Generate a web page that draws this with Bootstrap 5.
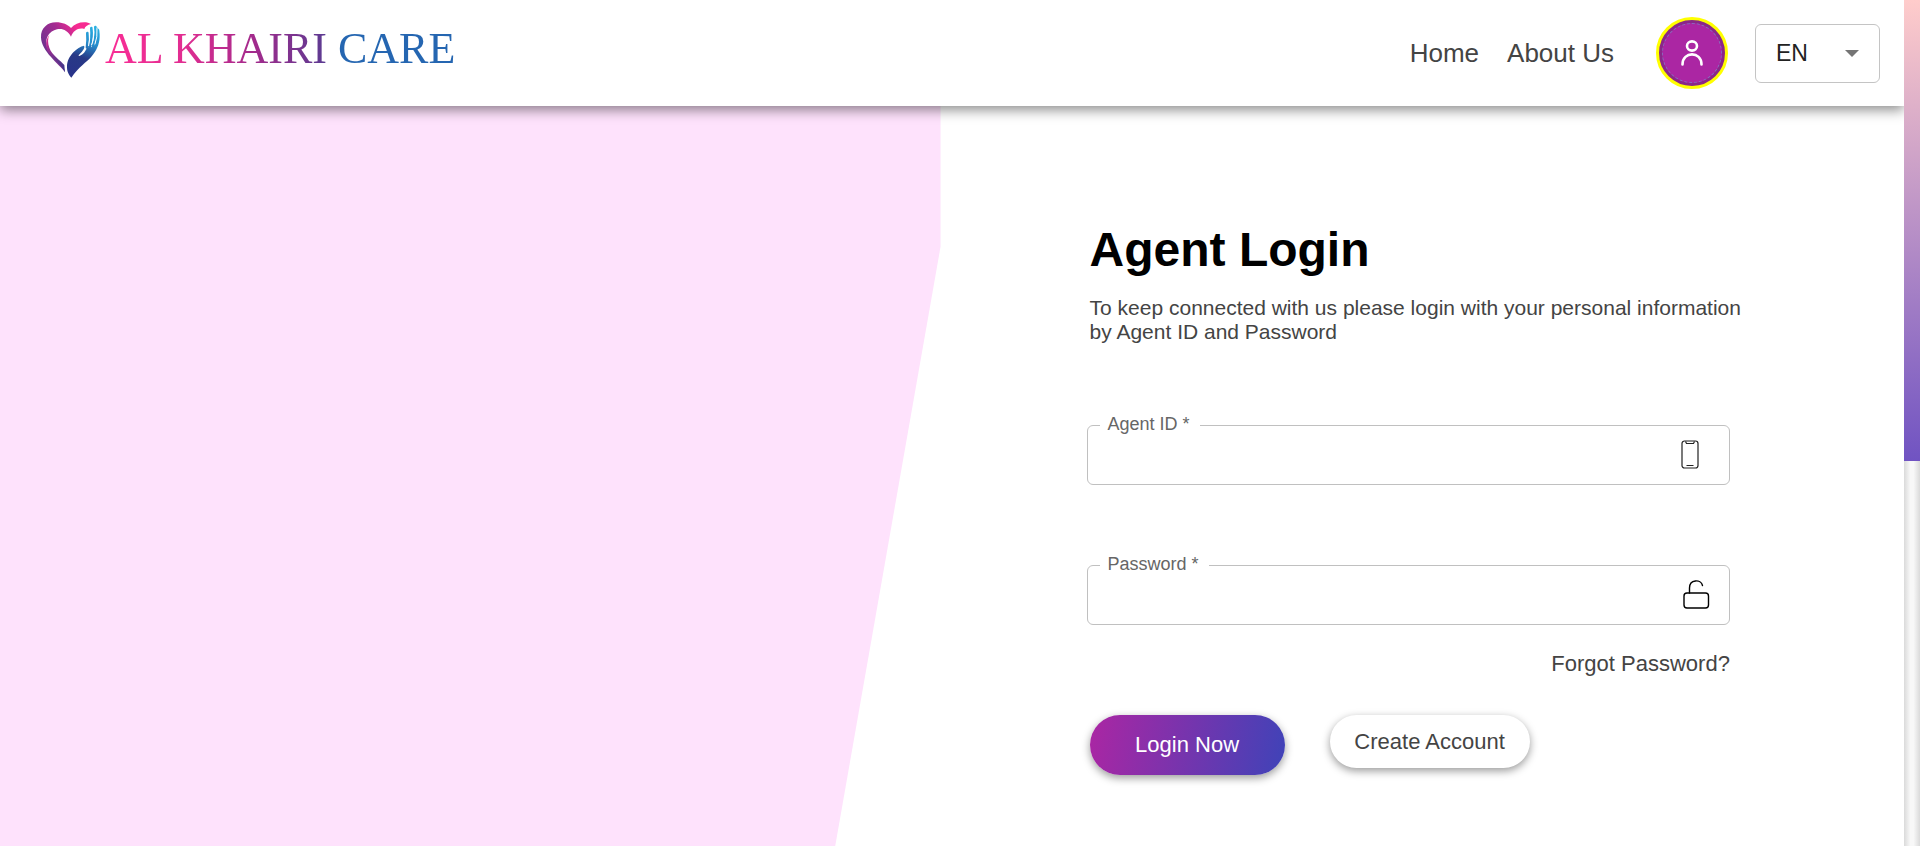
<!DOCTYPE html>
<html lang="en">
<head>
<meta charset="utf-8">
<meta name="viewport" content="width=device-width, initial-scale=1">
<title>Agent Login - Al Khairi Care</title>
<link href="https://cdn.jsdelivr.net/npm/bootstrap@5.3.0/dist/css/bootstrap.min.css" rel="stylesheet">
<style>
body { font-family: "Liberation Sans", Arial, sans-serif; color: #444; background: #fff; }
.site-header { min-height: 106px; padding: 0 24px 0 40px; background: #fff; box-shadow: 0 4px 12px rgba(0,0,0,.45); clip-path: inset(0 0 -30px 0); z-index: 2; }
.brand-text { font-family: "Liberation Serif", "Times New Roman", serif; font-size: 44px; line-height: 50px; color: transparent; -webkit-background-clip: text; background-clip: text; background-image: linear-gradient(90deg, #f92d95 0%, #e22d91 22%, #a42a8c 42%, #553c92 65%, #2566b1 66%); }
.site-nav { gap: 28px; margin-right: 42px; }
.site-nav a { font-size: 26px; line-height: 30px; color: #444; text-decoration: none; }
.avatar { width: 72px; height: 72px; margin-right: 27px; padding: 3px; border: 3px solid #ff0; border-radius: 50%; background: #8a2789; }
.avatar-disc { border: 1px dashed #8b6cc0; border-radius: 50%; background: #ab26a3; }
.lang-select { width: 125px; height: 59px; padding: 0 20px; font-size: 23px; color: #222; appearance: none; border: 1px solid #c4c4c4; border-radius: 6px; background: #fff url("data:image/svg+xml,%3Csvg xmlns='http://www.w3.org/2000/svg' width='14' height='7'%3E%3Cpath d='M0 0h14L7 7z' fill='%23757575'/%3E%3C/svg%3E") no-repeat right 20px center; }
.pink-panel { flex: 0 0 49.4%; background: #fee2fc; clip-path: polygon(0 0, 100% 0, 100% 19%, 88.8% 100%, 0 100%); }
.login-panel { padding: 115px 0 71px 146px; }
.login-title { font-size: 48px; line-height: 58px; margin-bottom: 17px; color: #000; }
.login-lead { font-size: 21px; line-height: 24px; margin-bottom: 81px; max-width: 664px; }
.inset-start { padding-left: 3px; }
.login-form { width: 78.7%; }
.field { height: 60px; }
.field input { height: 100%; padding: 0 80px 0 20px; font-size: 20px; border: 1px solid #c0c0c0; border-radius: 6px; }
.field label { left: 13px; top: -13px; padding: 0 10px 0 8px; background: #fff; font-size: 18px; line-height: 24px; color: #666; }
.field svg { top: 14px; }
.icon-phone { right: 30px; }
.icon-lock { right: 20px; }
.field-gap { margin-bottom: 80px; }
.forgot { margin: 25px 0 37px; font-size: 22px; line-height: 28px; }
.forgot a { color: #444; text-decoration: none; }
.pill { padding: 0; border: 0; border-radius: 30px; font-size: 22px; line-height: 26px; white-space: nowrap; box-shadow: 0 3px 8px rgba(0,0,0,.4); }
.pill-login { width: 195px; height: 60px; color: #fff; background: linear-gradient(100deg, #ab26a3, #3f43b8); }
.pill-create { width: 200px; height: 53px; color: #444; background: #fff; }
.button-gap { gap: 45px; }
.scroll-track { flex: 0 0 16px; background: linear-gradient(90deg, #dadada, #f8f8f8 40%, #f8f8f8 60%, #dadada); }
.scroll-thumb { height: 54.5vh; background: linear-gradient(#ffcccb, #7053c2); }
</style>
</head>
<body>
<div class="d-flex min-vh-100">
  <div class="d-flex flex-column flex-grow-1">
    <header class="site-header d-flex align-items-center justify-content-between position-relative">
      <a href="#" class="d-flex align-items-center gap-1 pb-2 text-decoration-none">
        <svg width="61" height="57" viewBox="30 33 183 171" aria-hidden="true">
          <defs>
            <linearGradient id="heart" x1="0" y1=".6" x2="1" y2="0"><stop offset="0" stop-color="#65338e"/><stop offset=".45" stop-color="#a52b91"/><stop offset=".75" stop-color="#f72b91"/></linearGradient>
            <linearGradient id="inner" x1="0" y1="0" x2="0" y2="1"><stop offset="0" stop-color="#f72b91"/><stop offset=".35" stop-color="#a32d91"/><stop offset="1" stop-color="#273a87"/></linearGradient>
            <linearGradient id="hand" gradientUnits="userSpaceOnUse" x1="195" y1="50" x2="145" y2="195"><stop offset="0" stop-color="#29b0e2"/><stop offset=".35" stop-color="#268bcb"/><stop offset=".65" stop-color="#283986"/><stop offset="1" stop-color="#29348a"/></linearGradient>
          </defs>
          <path fill="url(#heart)" d="M105 187C87 161 34 125 33 82C32 55 52 37 78 37C98 37 114 44 123 54C135 40 155 34 174 38L183 42C172 45 165 50 163 57C145 52 130 62 123 80C113 61 97 54 81 58C57 64 45 83 50 107C55 134 104 157 105 187Z"/>
          <path fill="url(#inner)" d="M58 74C42 95 47 119 63 137C78 154 97 168 105 187L103 165C93 152 65 135 58 113C53 99 53 86 58 74Z"/>
          <path fill="url(#hand)" d="M124 203C113 190 111 181 111 170C111 153 119 139 130 127C140 116 152 109 162 107C166 113 158 123 150 131Q143 138 148 138C161 133 167 122 171 113L180 112L186 111L194 105L199 87L202 52Q210 61 209 81C208 105 199 122 184 140C171 155 145 171 124 203Z"/>
          <path fill="none" stroke="url(#hand)" stroke-width="8" stroke-linecap="round" d="M172 69Q174 90 171 112M184 54Q187 82 179 112M196 51Q200 78 189 108M204 61L201 91"/>
          <path fill="none" stroke="#fff" stroke-width="3" stroke-linecap="round" d="M178 62Q181 88 176 107M190 54Q194 82 185 104M201 56Q203 82 195 102"/>
        </svg>
        <span class="brand-text">AL KHAIRI CARE</span>
      </a>
      <div class="d-flex align-items-center">
        <nav class="site-nav d-flex">
          <a href="#">Home</a>
          <a href="#">About Us</a>
        </nav>
        <button type="button" class="avatar d-flex" aria-label="Account">
          <span class="avatar-disc d-flex w-100 h-100 align-items-center justify-content-center">
            <svg width="26" height="28" viewBox="0 0 26 28" fill="none" stroke="#fff" stroke-width="2.6" stroke-linecap="round"><ellipse cx="13" cy="7" rx="5" ry="4.6"/><path d="M3.5 25.500C3.5 12 22.500 12 22.500 25.500"/></svg>
          </span>
        </button>
        <select class="lang-select" aria-label="Language"><option>EN</option></select>
      </div>
    </header>
    <main class="d-flex flex-grow-1">
      <div class="pink-panel"></div>
      <section class="login-panel flex-grow-1">
        <div class="inset-start">
          <h1 class="login-title fw-bold">Agent Login</h1>
          <p class="login-lead">To keep connected with us please login with your personal information by Agent ID and Password</p>
        </div>
        <form class="login-form">
          <div class="field field-gap position-relative">
            <input type="text" id="agent-id" class="w-100" required>
            <label for="agent-id" class="position-absolute">Agent ID *</label>
            <svg class="icon-phone position-absolute" width="20" height="32" viewBox="0 0 20 32" fill="none" stroke="#222" stroke-width="1.200"><rect x="2" y="2" width="16" height="27" rx="2.500"/><path d="M5.500 2.500L6.500 4.500H13.500L14.500 2.500M6.500 26.500H13.500"/></svg>
          </div>
          <div class="field position-relative">
            <input type="password" id="password" class="w-100" required>
            <label for="password" class="position-absolute">Password *</label>
            <svg class="icon-lock position-absolute" width="28" height="32" viewBox="0 0 28 32" fill="none" stroke="#000" stroke-width="1.400" stroke-linecap="round"><rect x="2" y="14" width="24.500" height="15" rx="3"/><path d="M7.500 14V9C7.500 0 19 0 20.500 6.500"/></svg>
          </div>
          <div class="forgot text-end"><a href="#">Forgot Password?</a></div>
          <div class="button-gap inset-start d-flex align-items-start">
            <button type="submit" class="pill pill-login">Login Now</button>
            <button type="button" class="pill pill-create">Create Account</button>
          </div>
        </form>
      </section>
    </main>
  </div>
  <div class="scroll-track" aria-hidden="true"><div class="scroll-thumb"></div></div>
</div>
<script src="https://cdn.jsdelivr.net/npm/bootstrap@5.3.0/dist/js/bootstrap.bundle.min.js"></script>
</body>
</html>
